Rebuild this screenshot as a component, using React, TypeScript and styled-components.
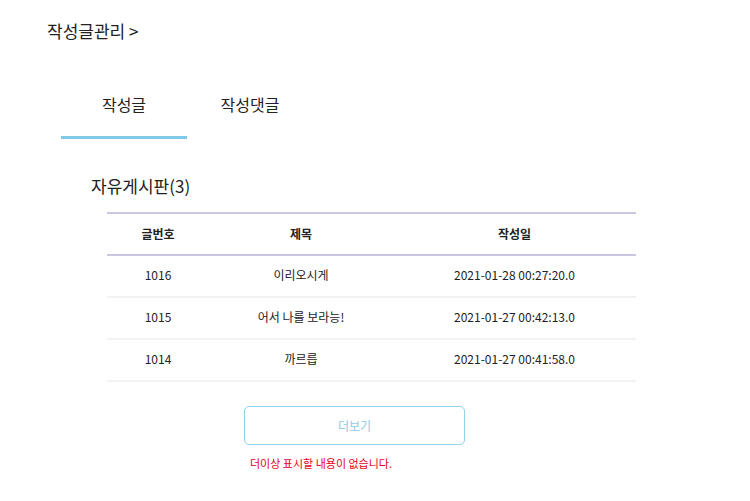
import React from "react";
import styled, { createGlobalStyle } from "styled-components";

const rows = [
  { no: 1016, title: "이리오시게", date: "2021-01-28 00:27:20.0" },
  { no: 1015, title: "어서 나를 보라능!", date: "2021-01-27 00:42:13.0" },
  { no: 1014, title: "까르릅", date: "2021-01-27 00:41:58.0" },
];

const GlobalStyle = createGlobalStyle`
  body {
    margin: 0;
    background: #fff;
    font-family: "Noto Sans CJK KR", "Noto Sans", sans-serif;
    color: #222;
  }
`;

export default function App() {
  return (
    <>
      <GlobalStyle />
      <Page>
        <PageTitle>작성글관리 &gt;</PageTitle>
        <Tabs>
          <Tab $active>작성글</Tab>
          <Tab>작성댓글</Tab>
        </Tabs>
        <BoardTitle>자유게시판(3)</BoardTitle>
        <Table>
          <thead>
            <tr>
              <Th $w={102}>글번호</Th>
              <Th $w={184}>제목</Th>
              <Th>작성일</Th>
            </tr>
          </thead>
          <tbody>
            {rows.map((r) => (
              <Row key={r.no}>
                <Td>{r.no}</Td>
                <Td>{r.title}</Td>
                <Td>{r.date}</Td>
              </Row>
            ))}
          </tbody>
        </Table>
        <MoreButton>더보기</MoreButton>
        <Notice>더이상 표시할 내용이 없습니다.</Notice>
      </Page>
    </>
  );
}

const Page = styled.div`
  padding: 20px 0 0 47px;
  width: 750px;
  box-sizing: border-box;
`;

const PageTitle = styled.h1`
  margin: 0;
  font-size: 17px;
  font-weight: 400;
  line-height: 22px;
`;

const Tabs = styled.div`
  display: flex;
  margin: 38px 0 0 14px;
`;

const Tab = styled.div<{ $active?: boolean }>`
  width: 126px;
  padding: 12px 0 20px;
  text-align: center;
  font-size: 16px;
  line-height: 24px;
  border-bottom: 3px solid ${(p) => (p.$active ? "#80cbe9" : "transparent")};
`;

const BoardTitle = styled.h2`
  margin: 34px 0 0 44px;
  font-size: 17px;
  font-weight: 400;
  line-height: 26px;
`;

const Table = styled.table`
  margin: 13px 0 0 60px;
  width: 529px;
  border-collapse: collapse;
  font-size: 12px;

  thead tr {
    border-top: 2px solid #c8c6e0;
    border-bottom: 2px solid #c8c6e0;
  }
`;

const Th = styled.th<{ $w?: number }>`
  width: ${(p) => (p.$w ? `${p.$w}px` : "auto")};
  height: 39px;
  padding: 0 0 1px;
  font-weight: 700;
  text-align: center;
`;

const Row = styled.tr`
  border-bottom: 2px solid #f2f2f2;
`;

const Td = styled.td`
  height: 37px;
  padding: 0 0 3px;
  text-align: center;
`;

const MoreButton = styled.button`
  display: block;
  margin: 24px 0 0 197px;
  width: 221px;
  height: 39px;
  background: #fff;
  border: 1px solid #92d1ea;
  border-radius: 5px;
  color: #8dcbe6;
  font-family: inherit;
  font-size: 12px;
`;

const Notice = styled.p`
  margin: 10px 0 0 203px;
  font-size: 11px;
  line-height: 16px;
  color: #e8001a;
`;
